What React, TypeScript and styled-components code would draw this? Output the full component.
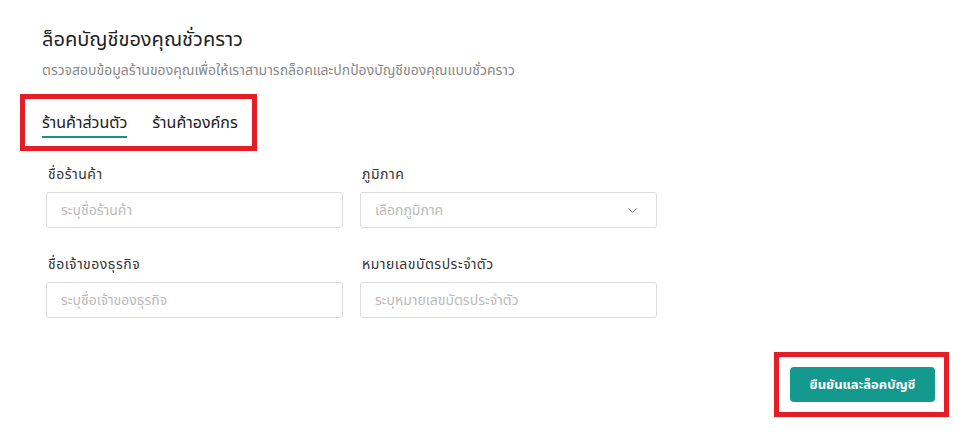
import styled, { createGlobalStyle } from "styled-components";
import { ChevronDown } from "lucide-react";
import { useState } from "react";

const GlobalStyle = createGlobalStyle`
  body {
    margin: 0;
    background: #ffffff;
    font-family: "Noto Sans Thai", "Noto Sans", sans-serif;
    color: #222;
  }
`;

const tabs = ["ร้านค้าส่วนตัว", "ร้านค้าองค์กร"];

export default function App() {
  const [active, setActive] = useState(0);

  return (
    <>
      <GlobalStyle />
      <Page>
        <Header>
          <Title>ล็อคบัญชีของคุณชั่วคราว</Title>
          <Subtitle>
            ตรวจสอบข้อมูลร้านของคุณเพื่อให้เราสามารถล็อคและปกป้องบัญชีของคุณแบบชั่วคราว
          </Subtitle>
        </Header>

        <Highlight>
          <TabList>
            {tabs.map((t, i) => (
              <Tab key={t} $active={i === active} onClick={() => setActive(i)}>
                {t}
              </Tab>
            ))}
          </TabList>
        </Highlight>

        <Form>
          <Field>
            <Label>ชื่อร้านค้า</Label>
            <Input placeholder="ระบุชื่อร้านค้า" />
          </Field>
          <Field>
            <Label>ภูมิภาค</Label>
            <SelectBox>
              <Placeholder>เลือกภูมิภาค</Placeholder>
              <ChevronDown size={15} strokeWidth={1.6} color="#666" />
            </SelectBox>
          </Field>
          <Field>
            <Label>ชื่อเจ้าของธุรกิจ</Label>
            <Input placeholder="ระบุชื่อเจ้าของธุรกิจ" />
          </Field>
          <Field>
            <Label>หมายเลขบัตรประจำตัว</Label>
            <Input placeholder="ระบุหมายเลขบัตรประจำตัว" />
          </Field>
        </Form>

        <Footer>
          <Highlight $pad="10px 9px 10px 11px">
            <Button type="button">ยืนยันและล็อคบัญชี</Button>
          </Highlight>
        </Footer>
      </Page>
    </>
  );
}

const Page = styled.div`
  width: 979px;
  height: 432px;
  box-sizing: border-box;
  padding: 26px 30px 0 20px;
  display: flex;
  flex-direction: column;
  & > * {
    flex-shrink: 0;
  }
`;

const Header = styled.div`
  padding-left: 22px;
  display: flex;
  flex-direction: column;
  gap: 8px;
`;

const Title = styled.h1`
  margin: 0;
  font-size: 20px;
  font-weight: 400;
  line-height: 28px;
  color: #222;
`;

const Subtitle = styled.p`
  margin: 0 0 14px;
  font-size: 14px;
  line-height: 18px;
  color: #888;
`;

const Highlight = styled.div<{ $pad?: string }>`
  align-self: flex-start;
  border: 5px solid #e31e26;
  padding: ${(p) => p.$pad ?? "0 14px 0 17px"};
`;

const TabList = styled.div`
  display: flex;
  gap: 25px;
  height: 47px;
  align-items: stretch;
`;

const Tab = styled.button<{ $active: boolean }>`
  background: none;
  border: none;
  padding: 0;
  margin: 0;
  font-family: inherit;
  font-size: 16px;
  line-height: 20px;
  color: #222;
  cursor: pointer;
  display: flex;
  align-items: center;
  position: relative;
  &::after {
    content: "";
    position: absolute;
    left: 0;
    right: 0;
    bottom: 8px;
    height: 2px;
    background: ${(p) => (p.$active ? "#1f8f86" : "transparent")};
  }
`;

const Form = styled.div`
  margin: 15px 0 0 26px;
  width: 611px;
  display: grid;
  grid-template-columns: 297px 297px;
  column-gap: 17px;
  row-gap: 28px;
`;

const Field = styled.div`
  display: flex;
  flex-direction: column;
  gap: 8px;
`;

const Label = styled.label`
  font-size: 14px;
  line-height: 18px;
  letter-spacing: 0.5px;
  color: #333;
  padding-left: 2px;
`;

const Input = styled.input`
  box-sizing: border-box;
  height: 36px;
  border: 1px solid #dcdcdc;
  border-radius: 3px;
  padding: 0 14px;
  font-family: inherit;
  font-size: 14px;
  color: #333;
  outline: none;
  &::placeholder {
    color: #bbb;
  }
`;

const SelectBox = styled.div`
  box-sizing: border-box;
  height: 36px;
  border: 1px solid #dcdcdc;
  border-radius: 3px;
  padding: 0 16px 0 14px;
  display: flex;
  align-items: center;
  justify-content: space-between;
`;

const Placeholder = styled.span`
  font-size: 14px;
  color: #bbb;
`;

const Footer = styled.div`
  margin-top: auto;
  margin-bottom: 15px;
  display: flex;
  justify-content: flex-end;
`;

const Button = styled.button`
  width: 145px;
  height: 35px;
  border: none;
  border-radius: 4px;
  background: #14998f;
  color: #fff;
  font-family: inherit;
  font-size: 13px;
  font-weight: 700;
  cursor: pointer;
`;
